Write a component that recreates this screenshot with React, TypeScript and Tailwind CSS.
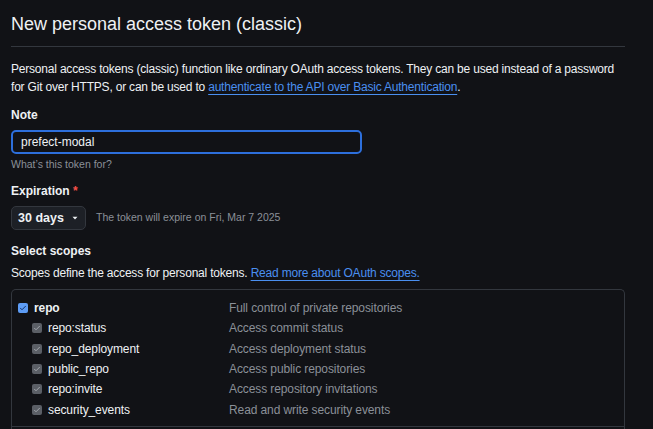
import React from "react";

interface Scope {
  name: string;
  description: string;
  child?: boolean;
}

const scopes: Scope[] = [
  { name: "repo", description: "Full control of private repositories" },
  { name: "repo:status", description: "Access commit status", child: true },
  { name: "repo_deployment", description: "Access deployment status", child: true },
  { name: "public_repo", description: "Access public repositories", child: true },
  { name: "repo:invite", description: "Access repository invitations", child: true },
  { name: "security_events", description: "Read and write security events", child: true },
];

const Check = ({ disabled }: { disabled?: boolean }) => (
  <span
    className={
      disabled
        ? "flex h-[10px] w-[10px] shrink-0 items-center justify-center rounded-[2px] bg-[#5b5f66]"
        : "flex h-[10px] w-[10px] shrink-0 items-center justify-center rounded-[2px] bg-[#5d9cf5]"
    }
  >
    <svg width="8" height="8" viewBox="0 0 16 16" fill="none">
      <path
        d="M3 8.5l3 3 7-7"
        stroke={disabled ? "#a4a8ae" : "#0d2f66"}
        strokeWidth="2"
        strokeLinecap="round"
        strokeLinejoin="round"
      />
    </svg>
  </span>
);

export default function App() {
  return (
    <div className="min-h-screen w-full bg-[#111216] pl-[11px] pr-[28px] font-['Liberation_Sans','Inter',sans-serif] text-[#eef1f4]">
      <h2 className="border-b border-[#33373e] pt-[11px] pb-[9px] text-[18px] leading-[26px] font-normal">
        New personal access token (classic)
      </h2>

      <p className="pt-[13px] text-[12px] leading-[18px] tracking-[-0.2px]">
        Personal access tokens (classic) function like ordinary OAuth access tokens. They can be used instead of a
        password for Git over HTTPS, or can be used to{" "}
        <a className="text-[#4a8ff0] underline underline-offset-[3px]">authenticate to the API over Basic Authentication</a>.
      </p>

      <div className="pt-[10px]">
        <label className="block text-[12px] leading-[18px] font-bold">Note</label>
        <div className="mt-[6px] flex h-[24px] w-[351px] items-center rounded-[5px] border-2 border-[#2d6fdc] px-[8px] text-[12px]">
          prefect-modal
        </div>
        <div className="mt-[2px] text-[10.5px] leading-[16px] text-[#8b9098]">What’s this token for?</div>
      </div>

      <div className="pt-[10px]">
        <label className="block text-[12px] leading-[18px] font-bold">
          Expiration <span className="text-[#f85149]">*</span>
        </label>
        <div className="mt-[6px] flex items-center gap-[10px]">
          <button className="flex h-[24px] w-[75px] items-center justify-center gap-[7px] rounded-[5px] border border-[#33373e] bg-[#1d2026] text-[12.5px] font-bold text-[#eef1f4]">
            30 days
            <svg width="8" height="8" viewBox="0 0 16 16" fill="#eef1f4">
              <path d="M3 5.5h10L8 11z" />
            </svg>
          </button>
          <span className="text-[10.5px] text-[#8b9098]">The token will expire on Fri, Mar 7 2025</span>
        </div>
      </div>

      <div className="pt-[12px]">
        <div className="text-[12px] leading-[18px] font-bold">Select scopes</div>
        <p className="mt-[4px] text-[12px] leading-[18px] tracking-[-0.2px]">
          Scopes define the access for personal tokens.{" "}
          <a className="text-[#4a8ff0] underline underline-offset-[3px]">Read more about OAuth scopes.</a>
        </p>
      </div>

      <div className="mt-[7px] rounded-t-[5px] border-x border-t border-[#33373e]">
        <div className="border-b border-[#33373e] px-[6px] pt-[8px] pb-[6px]">
          {scopes.map(scope => (
            <div key={scope.name} className="flex h-[20.3px] items-center text-[12px] tracking-[-0.1px]">
              <div className={scope.child ? "flex w-[211px] items-center gap-[6px] pl-[14px]" : "flex w-[211px] items-center gap-[6px]"}>
                <Check disabled={scope.child} />
                <span className={scope.child ? "" : "font-bold"}>{scope.name}</span>
              </div>
              <span className="text-[#8b9098]">{scope.description}</span>
            </div>
          ))}
        </div>
        <div className="h-[20px]" />
      </div>
    </div>
  );
}
